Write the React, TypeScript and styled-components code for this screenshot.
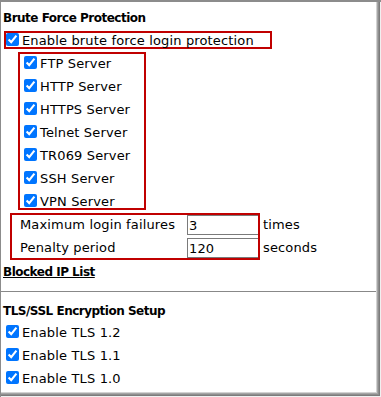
import React from "react";
import styled, { createGlobalStyle } from "styled-components";

const Global = createGlobalStyle`
  html, body { margin: 0; padding: 0; background: #fff; }
  body { font-family: "DejaVu Sans", Verdana, sans-serif; font-size: 13px; color: #000; letter-spacing: 0.15px; }
  * { box-sizing: border-box; }
`;

const Frame = styled.div`
  width: 381px;
  height: 397px;
  border-top: 2px solid #8c8c8c;
  border-left: 1px solid #8c8c8c;
  box-shadow: inset -1px -1px 0 #f0f0f0, inset -2px -2px 0 #7c7c7c,
    inset -3px -3px 0 #8e8e8e, inset -4px -4px 0 #a6a6a6,
    inset -5px -5px 0 #d2d2d2;
  overflow: hidden;
`;

const Heading = styled.div<{ $top: number }>`
  margin-top: ${(p) => p.$top}px;
  padding-left: 2px;
  font-size: 12px;
  font-weight: bold;
  letter-spacing: -0.5px;
  line-height: 16px;
  height: 16px;
`;

const LinkHeading = styled(Heading)`
  text-decoration: underline;
  cursor: pointer;
`;

const RedBox = styled.div<{ $left: number; $top: number; $w: number; $h: number }>`
  margin-left: ${(p) => p.$left}px;
  margin-top: ${(p) => p.$top}px;
  width: ${(p) => p.$w}px;
  height: ${(p) => p.$h}px;
  border: 2px solid #c00000;
`;

const EnableBox = styled(RedBox)`
  display: flex;
  align-items: flex-start;
`;

const Check = styled.input.attrs({ type: "checkbox", defaultChecked: true })<{ $ml: number }>`
  width: 13px;
  height: 13px;
  margin: 0 3px 0 ${(p) => p.$ml}px;
  accent-color: #0075ff;
  flex: none;
`;

const Label = styled.span`
  line-height: 16px;
  white-space: nowrap;
`;

const CheckRow = styled.label<{ $ml: number }>`
  display: flex;
  align-items: flex-start;
  height: 23px;
  padding-top: 2px;
  padding-left: ${(p) => p.$ml}px;
`;

const Options = styled.div`
  display: flex;
  align-items: flex-start;
  margin-top: 3px;
`;

const FieldGrid = styled(RedBox)`
  display: grid;
  grid-template-columns: 175px 71px;
  grid-template-rows: 20px 20px;
  row-gap: 3px;
`;

const FieldLabel = styled.span`
  padding-left: 8px;
  line-height: 20px;
  white-space: nowrap;
`;

const TextInput = styled.input`
  width: 71px;
  height: 20px;
  margin: 0;
  border: 1px solid #7a7a7a;
  border-right: none;
  padding: 0 2px 0 1px;
  font-family: "DejaVu Sans", Verdana, sans-serif;
  font-size: 13px;
  letter-spacing: 0.15px;
  color: #000;
  outline: none;
`;

const Units = styled.div`
  display: grid;
  grid-template-rows: 20px 20px;
  row-gap: 3px;
  padding-top: 2px;
  margin-left: 3px;
`;

const Unit = styled.span`
  line-height: 20px;
`;

const Rule = styled.div`
  margin-top: 11px;
  width: 375px;
  height: 1px;
  background: #888;
`;

const TlsList = styled.div`
  margin-top: 4px;
`;

const servers = ["FTP Server", "HTTP Server", "HTTPS Server", "Telnet Server", "TR069 Server", "SSH Server", "VPN Server"];
const tls = ["Enable TLS 1.2", "Enable TLS 1.1", "Enable TLS 1.0"];

export default function App() {
  return (
    <>
      <Global />
      <Frame>
        <Heading $top={8}>Brute Force Protection</Heading>
        <EnableBox as="label" $left={3} $top={5} $w={268} $h={18}>
          <Check $ml={0} />
          <Label>Enable brute force login protection</Label>
        </EnableBox>
        <RedBox $left={17} $top={3} $w={128} $h={158}>
          {servers.map((s) => (
            <CheckRow key={s} $ml={0}>
              <Check $ml={4} />
              <Label>{s}</Label>
            </CheckRow>
          ))}
        </RedBox>
        <Options>
          <FieldGrid $left={9} $top={0} $w={250} $h={47}>
            <FieldLabel>Maximum login failures</FieldLabel>
            <TextInput defaultValue="3" />
            <FieldLabel>Penalty period</FieldLabel>
            <TextInput defaultValue="120" />
          </FieldGrid>
          <Units>
            <Unit>times</Unit>
            <Unit>seconds</Unit>
          </Units>
        </Options>
        <LinkHeading $top={4}>Blocked IP List</LinkHeading>
        <Rule />
        <Heading $top={11}>TLS/SSL Encryption Setup</Heading>
        <TlsList>
          {tls.map((t) => (
            <CheckRow key={t} $ml={5}>
              <Check $ml={0} />
              <Label>{t}</Label>
            </CheckRow>
          ))}
        </TlsList>
      </Frame>
    </>
  );
}
